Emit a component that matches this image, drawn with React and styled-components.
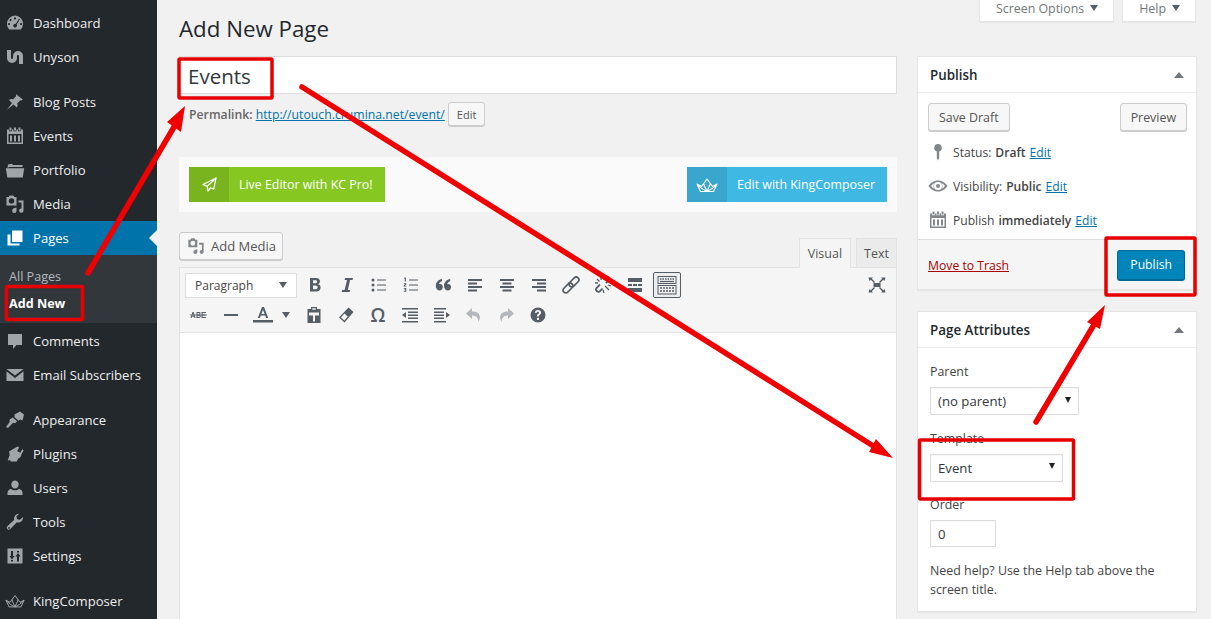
import styled, { createGlobalStyle } from 'styled-components'

const GlobalStyle = createGlobalStyle`
  html, body { margin: 0; padding: 0; background: #f1f1f1; }
  body { font-family: "Open Sans", "Noto Sans", sans-serif; font-size: 13px; color: #444; }
  * { box-sizing: border-box; }
`

const Page = styled.div`
  position: relative;
  display: flex;
  width: 1211px;
  height: 619px;
  overflow: hidden;
  background: #f1f1f1;
`

/* ---------- sidebar ---------- */
const Sidebar = styled.nav`
  flex: 0 0 157px;
  background: #23282d;
  padding-top: 6px;
`
const MenuItem = styled.div`
  position: relative;
  display: flex;
  align-items: center;
  height: 34px;
  padding-left: 5px;
  margin-bottom: ${p => (p.$gap ? '11px' : '0')};
  color: ${p => (p.$active ? '#fff' : '#eee')};
  background: ${p => (p.$active ? '#0073aa' : 'transparent')};
  font-size: 13.1px;
  svg { fill: ${p => (p.$active ? '#fff' : '#a0a5aa')}; }
  ${p => p.$active && `
    &::after {
      content: '';
      position: absolute;
      right: 0;
      top: 9px;
      border: 8px solid transparent;
      border-right-color: #f1f1f1;
      border-left: 0;
    }
  `}
`
const MenuIcon = styled.span`
  display: flex;
  justify-content: center;
  width: 20px;
  margin-right: 8px;
`
const Submenu = styled.div`
  height: 68px;
  margin-bottom: 1px;
  padding-top: 8px;
  background: #32373c;
`
const SubItem = styled.div`
  height: 27px;
  line-height: 27px;
  padding-left: 9px;
  font-size: 12.6px;
  font-weight: ${p => (p.$current ? 700 : 400)};
  color: ${p => (p.$current ? '#fff' : '#b4b9be')};
`

/* ---------- main column ---------- */
const Content = styled.main`
  display: flex;
  gap: 20px;
  padding-left: 22px;
`
const EditColumn = styled.div`
  width: 718px;
`
const Heading = styled.h1`
  margin: 0;
  height: 56px;
  padding-top: 14px;
  font-size: 22.3px;
  line-height: 29px;
  font-weight: 400;
  color: #23282d;
`
const TitleInput = styled.div`
  height: 38px;
  padding-left: 8px;
  background: #fff;
  border: 1px solid #ddd;
  font-size: 20.5px;
  line-height: 38px;
  color: #32373c;
`
const PermalinkRow = styled.div`
  display: flex;
  align-items: center;
  height: 24px;
  margin: 8px 0 31px;
  padding-left: 10px;
  font-size: 12.25px;
  color: #666;
  b { font-weight: 600; margin-right: 3px; }
`
const Link = styled.a`
  color: ${p => (p.$danger ? '#a00' : '#0073aa')};
  text-decoration: underline;
`
const SmallButton = styled.span`
  display: flex;
  align-items: center;
  height: 24px;
  margin-left: 3px;
  padding: 0 8px;
  font-size: 11px;
  color: #555;
  background: #f7f7f7;
  border: 1px solid #ccc;
  border-radius: 3px;
  box-shadow: 0 1px 0 #ccc;
`
const KcBar = styled.div`
  display: flex;
  justify-content: space-between;
  height: 55px;
  padding: 10px;
  background: #fafafa;
`
const KcButton = styled.div`
  display: flex;
  align-items: center;
  height: 35px;
  color: #fff;
  font-size: 12.4px;
  font-weight: 400;
  background: ${p => p.$color};
  padding-right: 12px;
`
const KcIcon = styled.span`
  display: flex;
  align-items: center;
  justify-content: center;
  width: 40px;
  height: 100%;
  margin-right: 10px;
  background: ${p => p.$color};
`
const EditorHead = styled.div`
  display: flex;
  justify-content: space-between;
  align-items: flex-end;
  height: 55px;
`
const MediaButton = styled.div`
  display: flex;
  align-items: center;
  gap: 6px;
  height: 28px;
  margin-bottom: 7px;
  padding: 0 6px 0 7px;
  color: #555;
  background: #f7f7f7;
  border: 1px solid #ccc;
  border-radius: 3px;
  box-shadow: 0 1px 0 #ccc;
  svg { fill: #82878c; }
`
const Tabs = styled.div`
  display: flex;
  gap: 5px;
`
const Tab = styled.div`
  height: ${p => (p.$active ? '30px' : '29px')};
  margin-bottom: ${p => (p.$active ? '-1px' : '0')};
  padding: 0 ${p => (p.$active ? '8px' : '7px')};
  line-height: 29px;
  font-size: 12.5px;
  color: #555;
  background: ${p => (p.$active ? '#f5f5f5' : '#ebebeb')};
  border: 1px solid #e2e2e2;
  border-bottom: ${p => (p.$active ? '1px solid #f5f5f5' : '0')};
`
const Toolbar = styled.div`
  display: flex;
  flex-direction: column;
  height: 66px;
  padding: 2px 3px 0;
  background: #f5f5f5;
  border: 1px solid #e2e2e2;
`
const ToolRow = styled.div`
  display: flex;
  align-items: center;
  height: 30px;
`
const FormatSelect = styled.div`
  display: flex;
  align-items: center;
  justify-content: space-between;
  width: 112px;
  height: 25px;
  margin: 0 2px;
  padding: 0 9px;
  font-size: 12px;
  color: #444;
  background: #fff;
  border: 1px solid #ddd;
`
const Caret = styled.span`
  width: 0;
  height: 0;
  border-style: solid;
  border-width: ${p => (p.$up ? '0 5px 6px' : '6px 4.5px 0')};
  border-color: ${p => (p.$up ? 'transparent transparent #72777c' : '#555d66 transparent transparent')};
`
const ToolButton = styled.span`
  display: flex;
  align-items: center;
  justify-content: center;
  width: 28px;
  height: 26px;
  margin: 0 2px;
  color: #555d66;
  border: 1px solid ${p => (p.$on ? '#555d66' : 'transparent')};
  border-radius: 2px;
  background: ${p => (p.$on ? '#eee' : 'transparent')};
  opacity: ${p => (p.$off ? 0.4 : 1)};
  svg { fill: #555d66; }
`
const SplitCaret = styled.span`
  display: flex;
  align-items: center;
  justify-content: center;
  width: 18px;
  margin-left: -2px;
  margin-right: 3px;
`
const ToolSpacer = styled.span`
  flex: 1;
`
const OmegaGlyph = styled.span`
  font-size: 19px;
  font-weight: 600;
`
const EditorArea = styled.div`
  height: 400px;
  background: #fff;
  border: 1px solid #e2e2e2;
  border-top: 0;
`

/* ---------- right column ---------- */
const SideColumn = styled.aside`
  width: 280px;
`
const ScreenTabs = styled.div`
  display: flex;
  justify-content: flex-end;
  gap: 8px;
  height: 22px;
  margin-bottom: 34px;
  padding-right: 1px;
`
const ScreenTab = styled.div`
  display: flex;
  align-items: center;
  gap: 6px;
  padding: 0 15px 5px 16px;
  font-size: 12.4px;
  color: #72777c;
  background: #fff;
  border: 1px solid #e5e5e5;
  border-top: 0;
  box-shadow: 0 1px 1px rgba(0, 0, 0, .04);
`
const Box = styled.section`
  margin-bottom: 21px;
  background: #fff;
  border: 1px solid #e5e5e5;
  box-shadow: 0 1px 1px rgba(0, 0, 0, .04);
`
const BoxHead = styled.header`
  display: flex;
  align-items: center;
  justify-content: space-between;
  height: 36px;
  padding: 0 12px;
  border-bottom: 1px solid #eee;
  font-size: 13.4px;
  font-weight: 600;
  color: #23282d;
`
const ActionRow = styled.div`
  display: flex;
  justify-content: space-between;
  padding: 10px 9px 0 10px;
`
const Button = styled.span`
  display: flex;
  align-items: center;
  height: 28px;
  padding: 0 10px;
  font-size: 12.4px;
  color: #555;
  background: #f7f7f7;
  border: 1px solid #ccc;
  border-radius: 3px;
  box-shadow: 0 1px 0 #ccc;
`
const StatusList = styled.div`
  padding: 4px 0 2px;
`
const StatusRow = styled.div`
  display: flex;
  align-items: center;
  height: 34px;
  padding-left: 10px;
  font-size: 12.1px;
  color: #444;
  b { font-weight: 600; margin: 0 4px; }
`
const StatusIcon = styled.span`
  display: flex;
  justify-content: center;
  width: 20px;
  margin-right: 5px;
  svg { fill: #82878c; flex: none; }
`
const BoxFoot = styled.div`
  display: flex;
  align-items: center;
  justify-content: space-between;
  height: 50px;
  padding: 1px 11px 0 10px;
  font-size: 12.2px;
  background: #f5f5f5;
  border-top: 1px solid #ddd;
`
const PrimaryButton = styled.span`
  display: flex;
  align-items: center;
  height: 31px;
  padding: 0 12px;
  color: #fff;
  font-size: 12.2px;
  background: #0085ba;
  border: 1px solid #006799;
  border-bottom-width: 2px;
  border-radius: 3px;
`
const AttrBody = styled.div`
  padding: 14px 12px 12px;
`
const FieldLabel = styled.div`
  height: 18px;
  line-height: 20px;
  margin-bottom: 7px;
  font-size: 12.4px;
  color: #444;
`
const SelectField = styled.div`
  display: flex;
  align-items: center;
  justify-content: space-between;
  width: ${p => p.$w}px;
  height: 28px;
  margin-bottom: 13.5px;
  padding: 0 7px;
  font-size: 13.2px;
  color: #32373c;
  border: 1px solid #ddd;
  box-shadow: inset 0 1px 2px rgba(0, 0, 0, .04);
`
const BlackCaret = styled.span`
  width: 0;
  height: 0;
  border-style: solid;
  border-width: 6px 3.5px 0;
  border-color: #222 transparent transparent;
  margin-top: -3px;
`
const NumberField = styled(SelectField)`
  height: 27px;
`
const HelpText = styled.p`
  margin: 0;
  font-size: 12.4px;
  line-height: 19px;
  color: #444;
`

/* ---------- red annotations, lying over the page ---------- */
const Annotations = styled.svg`
  position: absolute;
  left: 0;
  top: 0;
  pointer-events: none;
`

const Svg = ({ size = 20, children }) => (
  <svg width={size} height={size} viewBox="0 0 20 20">{children}</svg>
)

/* sidebar + box icons, all on a 20 grid */
const IconGauge = () => <Svg><path fillRule="evenodd" d="M10 2.5a8.2 8.2 0 0 0-8 8.2c0 2.3.9 4.3 2.3 5.8h11.4a8.2 8.2 0 0 0 2.3-5.8 8.2 8.2 0 0 0-8-8.2zM10 4.3a1.1 1.1 0 1 1 0 2.2 1.1 1.1 0 0 1 0-2.2zM5.6 6a1.1 1.1 0 1 1 0 2.2 1.1 1.1 0 0 1 0-2.2zM14 5.8l.9.5-3.2 5.2a1.9 1.9 0 1 1-3-.1 1.9 1.9 0 0 1 2-.5zM4 10a1.1 1.1 0 1 1 0 2.2 1.1 1.1 0 0 1 0-2.2zM16 10a1.1 1.1 0 1 1 0 2.2 1.1 1.1 0 0 1 0-2.2z" /></Svg>
const IconUnyson = () => (
  <Svg>
    <path d="M4 3v8a3 3 0 0 0 6 0V9a3 3 0 0 1 6 0v8" fill="none" stroke="#a0a5aa" strokeWidth="4" />
  </Svg>
)
const IconPin = () => <Svg><path d="M11.2 2.2l6.6 5.2-1.3 1.2-1-.4-3.300 3.300c.7 1.5.5 2.900-.5 4l-3.200-3-6.500 5.200 5-6.700-3-3c1.100-1.100 2.600-1.300 4-.6l3.200-3.300-.4-1z" /></Svg>
const IconCalendar = ({ size }) => <Svg size={size}><path fillRule="evenodd" d="M4.5 1.5h2v3h-2zM9 1.5h2v3H9zM13.5 1.5h2v3h-2zM2 3.5h2v1.800h3V3.500h1.500v1.800h3V3.500H13v1.800h3V3.500h2V18H2zM3.500 8v8.500h13V8zM5 9.500h2v6H5zM9 9.500h2v6H9zM13 9.500h2v6h-2z" /></Svg>
const IconFolder = () => <Svg><path d="M3 4.500l4-.8 1 1.300h9.500V7H4.500l-2 1zM.8 8.200h18.400l-1.400 9.300H2.300z" /></Svg>
const IconMedia = ({ size }) => <Svg size={size}><path fillRule="evenodd" d="M1.5 3h2.200l1-1.500h3.600l1 1.500h2.200v8.500H1.500zM6.500 4.200a2.700 2.700 0 1 0 0 5.400 2.700 2.700 0 0 0 0-5.400zM13.500 6.500h5v10a2.200 2.200 0 1 1-2-2.100V8.500h-3zM8 14.500l3.500-1v3.200a2.200 2.200 0 1 1-2-2.100v-.8l-1.500.4z" /></Svg>
const IconPages = () => <Svg><path d="M7 2.500h10.500V14H7zM2.500 6.500h3v9h9v2h-12z" /></Svg>
const IconComment = () => <Svg><path d="M3 3h14v11h-5.500L8 18v-4H3z" /></Svg>
const IconMail = () => <Svg><path d="M1.500 4h17L10 10.500zM1.500 6.200L10 13l8.500-6.800V16h-17z" /></Svg>
const IconBrush = () => <Svg><path d="M9.500 4.500l5.500-3 4 3-1.500 6-2.500-1-1.500 1.200-4-3.500zM7.800 7.500l4.300 3.700-2 2-2-.5L3 18l-2-1 3.800-5.300-.3-2.200z" /></Svg>
const IconPlug = () => <Svg><path d="M12.500 2.500l1.700 1-2 3.500 3 1.700 2-3.500 1.500 1-2.200 4c-.3 2.300-1.500 3.800-3.300 4.300l-1.400 3H5.500l-.3-1.500-2.500.5 2-5.500L4 7.500z" /></Svg>
const IconUser = () => <Svg><path d="M10 2.500a3.700 3.700 0 0 1 3.700 4c0 2.300-1.500 4-3.700 4s-3.700-1.700-3.700-4a3.700 3.700 0 0 1 3.700-4zM6 10.800c1 1 2.500 1.500 4 1.500s3-.5 4-1.500c2 .7 3.500 2.200 3.500 4V17h-15v-2.200c0-1.800 1.500-3.300 3.500-4z" /></Svg>
const IconWrench = () => <Svg><path d="M18 5.500a4.700 4.700 0 0 1-6.200 4.700L5.300 17a2 2 0 0 1-3-2.700l7-6.500A4.700 4.700 0 0 1 14.200 1.700l-2.700 2.600.5 3 3 .5 2.700-2.700zM4 15a.9.9 0 1 0 0 1.800A.9.9 0 0 0 4 15z" /></Svg>
const IconSliders = () => <Svg><path fillRule="evenodd" d="M2.500 2.500h15v15h-15zM6 5v5H4.500L7 13.500 9.500 10H8V5zM6 14v1.500h2V14zM12 15.500h2v-5h1.500L13 7l-2.500 3.500H12zM12 6.500h2V5h-2z" /></Svg>
const IconCrown = ({ color = '#a0a5aa', size = 20 }) => (
  <svg width={size} height={size} viewBox="0 0 22 20" style={{ fill: 'none' }}>
    <path d="M1 9l4.500 2.500L11 4l5.500 7.500L21 9l-3.500 7.500h-13zM1 9c3 4 7 6 10 7.500C14 15 18 13 21 9M7.500 8.500C8.500 11 10 14 11 16.500c1-2.500 2.500-5.500 3.500-8" stroke={color} strokeWidth="1.100" strokeLinejoin="round" />
  </svg>
)
const IconSend = () => (
  <svg width="15" height="15" viewBox="0 0 16 16" style={{ fill: 'none' }}>
    <path d="M15 1L1 8l4.500 2zM15 1L5.500 10l1 5 2.500-3.500 3.500 1.500z" stroke="#fff" strokeWidth="1.300" strokeLinejoin="round" />
  </svg>
)
const IconKey = () => <Svg><path d="M10 2a3.800 3.800 0 0 1 1.200 7.400V16L10 18.500 8.800 16V9.400A3.800 3.800 0 0 1 10 2z" /></Svg>
const IconEye = () => <Svg><path fillRule="evenodd" d="M10 4.500c4.300 0 7.700 2.700 9.500 5.500-1.800 2.800-5.200 5.500-9.500 5.500S2.300 12.800.5 10C2.300 7.200 5.700 4.500 10 4.500zM10 6a4 4 0 1 0 0 8 4 4 0 0 0 0-8zM3 10c1 1.300 2.200 2.400 3.600 3.100A5.500 5.500 0 0 1 6.600 6.900 10 10 0 0 0 3 10zM17 10a10 10 0 0 0-3.600-3.100 5.500 5.500 0 0 1 0 6.200c1.400-.7 2.600-1.800 3.600-3.100zM10 8a2 2 0 1 1 0 4 2 2 0 0 1 0-4z" /></Svg>

/* editor toolbar icons */
const Lines = ({ rows }) => (
  <Svg>
    {rows.map(([x, y, w, h = 2], i) => <rect key={i} x={x} y={y} width={w} height={h} />)}
  </Svg>
)
const IconBold = () => <Svg><path fillRule="evenodd" d="M5 3h6c2.500 0 4 1.300 4 3.300 0 1.500-.8 2.500-2 2.900 1.600.3 2.600 1.500 2.600 3.300 0 2.500-1.800 4-4.600 4H5zM8 5.300v2.900h2.300c1.100 0 1.700-.5 1.700-1.500s-.6-1.400-1.700-1.400zM8 10.400v3.800h2.600c1.300 0 2-.7 2-1.900s-.7-1.900-2-1.900z" /></Svg>
const IconItalic = () => <Svg><path d="M8 3h8l-.5 2h-2.400L10.800 15h2.400l-.5 2H4.700l.5-2h2.400L10 5H7.600z" /></Svg>
const IconUl = () => (
  <Svg>
    <circle cx="4" cy="5" r="1.500" /><circle cx="4" cy="10" r="1.500" /><circle cx="4" cy="15" r="1.500" />
    <rect x="8" y="4.500" width="9" height="1" /><rect x="8" y="9.500" width="9" height="1" /><rect x="8" y="14.500" width="9" height="1" />
  </Svg>
)
const IconOl = () => (
  <Svg>
    <rect x="8" y="4.500" width="9" height="1" /><rect x="8" y="9.500" width="9" height="1" /><rect x="8" y="14.500" width="9" height="1" />
    <path d="M3.500 2.500h1.300v4H3.700V3.700h-.7zM2.800 8.200h2.500v1l-1.400 1.500h1.500v.8H2.700v-.9l1.400-1.600H2.800zM2.800 13h2.500v3.700H2.800v-.8h1.500v-.7H3.200v-.7h1.100v-.7H2.800z" />
  </Svg>
)
const IconQuote = () => <Svg><path d="M9 4v2.200c-1.900.5-2.900 1.700-2.900 2.900.3-.1.600-.1.900-.1 1.700 0 2.800 1.200 2.800 2.900S8.500 15.500 6.800 15.500C4.500 15.500 2.800 13.700 2.800 10.800 2.800 7.500 5 4.700 9 4zM17.200 4v2.200c-1.900.5-2.900 1.700-2.900 2.900.3-.1.600-.1.900-.1 1.700 0 2.800 1.200 2.800 2.900s-1.300 3.600-3 3.600c-2.300 0-4-1.800-4-4.700 0-3.300 2.200-6.100 6.200-6.800z" /></Svg>
const IconLink = () => (
  <svg width="20" height="20" viewBox="0 0 20 20" style={{ fill: 'none' }}>
    <g stroke="#555d66" strokeWidth="1.700" fill="none" transform="rotate(-45 10 10)">
      <rect x="0" y="7.300" width="11.500" height="5.400" rx="2.700" />
      <rect x="8.500" y="7.300" width="11.500" height="5.400" rx="2.700" />
    </g>
  </svg>
)
const IconUnlink = () => (
  <svg width="20" height="20" viewBox="0 0 20 20" style={{ fill: 'none' }}>
    <path d="M7 9.500L3.500 13c-1.800 2 1.500 5 3.500 3.200l2.500-2.700M13 8l3-3c1.500-2-1.500-4.500-3.300-2.800L10.500 4.500" stroke="#555d66" strokeWidth="1.800" />
    <path d="M4 4l2.500 2.500M8 2v3M2 8h3M12 11l4 4M15 10l3 1M10 15l1 3" stroke="#555d66" strokeWidth="1.300" />
  </svg>
)
const IconFullscreen = () => (
  <Svg>
    <rect x="6.500" y="8" width="7" height="4" />
    <path d="M1.500 2.500h4.500L4.800 3.800 8 7 7 8 3.800 4.800 2.500 6zM18.500 2.500H14l1.200 1.300L12 7l1 1 3.200-3.200L17.500 6zM1.500 17.500H6l-1.200-1.300L8 13l-1-1-3.200 3.200L2.500 14zM18.500 17.500H14l1.200-1.300L12 13l1-1 3.200 3.200 1.300-1.200z" />
  </Svg>
)
const IconKeyboard = () => (
  <svg width="22" height="22" viewBox="0 0 22 22" style={{ fill: 'none' }}>
    <rect x="2" y="2.500" width="18" height="7" stroke="#555d66" strokeWidth="1" />
    <rect x="2" y="11.500" width="18" height="8.500" stroke="#555d66" strokeWidth="1" />
    <path d="M4 5h14" stroke="#555d66" strokeWidth="1.500" strokeDasharray="1.500 1" />
    <path d="M4 7.500h14" stroke="#555d66" strokeWidth="1.200" />
    <path d="M4 14h14M4 17h14" stroke="#555d66" strokeWidth="1.500" strokeDasharray="2 1" />
  </svg>
)
const IconAbc = () => (
  <svg width="20" height="20" viewBox="0 0 20 20">
    <path d="M1.500 13l2-6h1.200l2 6H5.500l-.4-1.300H3l-.4 1.300zM3.300 10.800h1.500L4.100 8.500zM7.500 7h2.400c1.100 0 1.700.5 1.700 1.500 0 .6-.3 1-.8 1.200.7.200 1 .7 1 1.400 0 1.200-.8 1.900-2 1.900H7.500zM8.600 8v1.500h1.100c.5 0 .8-.3.8-.8S10.200 8 9.700 8zM8.600 10.400V12h1.300c.5 0 .9-.3.9-.8s-.4-.8-.9-.8zM12.500 7h4.500v1h-3.400v1.500h3v1h-3V12H17v1h-4.500z" />
    <rect x="1" y="9.500" width="17" height="1" opacity=".75" />
  </svg>
)
const IconColor = () => (
  <Svg>
    <path fillRule="evenodd" d="M9 2h2l4.200 11h-2.100l-.9-2.600H7.800L6.900 13H4.800zM10 4.700L8.400 8.900h3.200z" />
    <rect x="0" y="15" width="20" height="2.500" />
  </Svg>
)
const IconPaste = () => <Svg><path fillRule="evenodd" d="M7 2h6v2h3.500v14h-13V4H7zM8.300 3.200v1.500h3.400V3.200zM5 7.500v3h4v6h2v-6h4v-3z" /></Svg>
const IconEraser = () => <Svg><path fillRule="evenodd" d="M12.500 2.500l5 4.500-9 10.500L3 12.500zM5 12.500l3.300 3 3.500-4-3.400-3z" /></Svg>
const IconOutdent = () => <Svg><path d="M2 3h16v1.500H2zM8 6.500h10V8H8zM8 9.500h10V11H8zM8 12.500h10V14H8zM2 16h16v1.500H2zM2 10l4-3v6z" /></Svg>
const IconIndent = () => <Svg><path d="M2 3h12v1.500H2zM2 6.500h10V8H2zM2 9.500h10V11H2zM2 12.500h10V14H2zM2 16h12v1.500H2zM18 10l-4-3v6z" /></Svg>
const IconUndo = () => <Svg><path d="M8 3L2 8.500 8 14v-3.500c4 0 6 2 6.500 6.500 3-5 1.500-10.500-6.500-10.500z" /></Svg>
const IconRedo = () => <Svg><path d="M12 3l6 5.500-6 5.500v-3.500c-4 0-6 2-6.500 6.500-3-5-1.500-10.500 6.500-10.500z" /></Svg>
const IconHelp = () => <Svg><path fillRule="evenodd" d="M10 2.500a7.500 7.500 0 1 1 0 15 7.500 7.500 0 0 1 0-15zM10 5c-1.800 0-3 1-3.200 2.700l1.900.3c.1-.8.500-1.200 1.200-1.200.7 0 1.100.4 1.100.9 0 .5-.3.800-.9 1.300-.9.700-1.200 1.300-1.200 2.500h2c0-.8.200-1.100.9-1.600.8-.6 1.300-1.300 1.300-2.300C13.100 6 11.900 5 10 5zM9 12.800V15h2v-2.200z" /></Svg>

const RED = '#e60000'

const Frame = ({ x, y, w, h }) => (
  <rect x={x} y={y} width={w} height={h} fill="none" stroke={RED} strokeWidth="3.500" rx="1" />
)
const Arrow = ({ from, to, head }) => (
  <g>
    <line x1={from[0]} y1={from[1]} x2={(head[0][0] + head[1][0]) / 2} y2={(head[0][1] + head[1][1]) / 2} stroke="#f00000" strokeWidth="5.500" strokeLinecap="round" />
    <polygon points={`${to[0]},${to[1]} ${head[0][0]},${head[0][1]} ${head[1][0]},${head[1][1]}`} fill="#f00000" />
  </g>
)

const menuTop = [
  { label: 'Dashboard', icon: <IconGauge /> },
  { label: 'Unyson', icon: <IconUnyson />, gap: true },
  { label: 'Blog Posts', icon: <IconPin /> },
  { label: 'Events', icon: <IconCalendar /> },
  { label: 'Portfolio', icon: <IconFolder /> },
  { label: 'Media', icon: <IconMedia /> },
]
const menuBottom = [
  { label: 'Comments', icon: <IconComment /> },
  { label: 'Email Subscribers', icon: <IconMail />, gap: true },
  { label: 'Appearance', icon: <IconBrush /> },
  { label: 'Plugins', icon: <IconPlug /> },
  { label: 'Users', icon: <IconUser /> },
  { label: 'Tools', icon: <IconWrench /> },
  { label: 'Settings', icon: <IconSliders />, gap: true },
  { label: 'KingComposer', icon: <IconCrown /> },
]

const renderMenu = items => items.map(item => (
  <MenuItem key={item.label} $gap={item.gap}>
    <MenuIcon>{item.icon}</MenuIcon>
    <span>{item.label}</span>
  </MenuItem>
))

export default function App() {
  return (
    <Page>
      <GlobalStyle />
      <Sidebar>
        {renderMenu(menuTop)}
        <MenuItem $active>
          <MenuIcon><IconPages /></MenuIcon>
          <span>Pages</span>
        </MenuItem>
        <Submenu>
          <SubItem>All Pages</SubItem>
          <SubItem $current>Add New</SubItem>
        </Submenu>
        {renderMenu(menuBottom)}
      </Sidebar>

      <Content>
        <EditColumn>
          <Heading>Add New Page</Heading>
          <TitleInput>Events</TitleInput>
          <PermalinkRow>
            <b>Permalink:</b>
            <Link>http://utouch.crumina.net/event/</Link>
            <SmallButton>Edit</SmallButton>
          </PermalinkRow>
          <KcBar>
            <KcButton $color="#87c722">
              <KcIcon $color="#79b31e"><IconSend /></KcIcon>
              Live Editor with KC Pro!
            </KcButton>
            <KcButton $color="#3fb8e3">
              <KcIcon $color="#39a6cd"><IconCrown color="#fff" size={22} /></KcIcon>
              Edit with KingComposer
            </KcButton>
          </KcBar>
          <EditorHead>
            <MediaButton><IconMedia size={18} />Add Media</MediaButton>
            <Tabs>
              <Tab $active>Visual</Tab>
              <Tab>Text</Tab>
            </Tabs>
          </EditorHead>
          <Toolbar>
            <ToolRow>
              <FormatSelect>Paragraph<Caret /></FormatSelect>
              <ToolButton><IconBold /></ToolButton>
              <ToolButton><IconItalic /></ToolButton>
              <ToolButton><IconUl /></ToolButton>
              <ToolButton><IconOl /></ToolButton>
              <ToolButton><IconQuote /></ToolButton>
              <ToolButton><Lines rows={[[3, 4, 14], [3, 7.5, 9], [3, 11, 14], [3, 14.5, 9]]} /></ToolButton>
              <ToolButton><Lines rows={[[3, 4, 14], [5.5, 7.5, 9], [3, 11, 14], [5.5, 14.5, 9]]} /></ToolButton>
              <ToolButton><Lines rows={[[3, 4, 14], [8, 7.5, 9], [3, 11, 14], [8, 14.5, 9]]} /></ToolButton>
              <ToolButton><IconLink /></ToolButton>
              <ToolButton><IconUnlink /></ToolButton>
              <ToolButton><Lines rows={[[3, 3, 14, 4], [3, 9, 4], [8, 9, 4], [13, 9, 4], [3, 13, 14, 4]]} /></ToolButton>
              <ToolButton $on><IconKeyboard /></ToolButton>
              <ToolSpacer />
              <ToolButton><IconFullscreen /></ToolButton>
            </ToolRow>
            <ToolRow>
              <ToolButton><IconAbc /></ToolButton>
              <ToolButton><Lines rows={[[3, 9, 14]]} /></ToolButton>
              <ToolButton><IconColor /></ToolButton>
              <SplitCaret><Caret /></SplitCaret>
              <ToolButton><IconPaste /></ToolButton>
              <ToolButton><IconEraser /></ToolButton>
              <ToolButton><OmegaGlyph>Ω</OmegaGlyph></ToolButton>
              <ToolButton><IconOutdent /></ToolButton>
              <ToolButton><IconIndent /></ToolButton>
              <ToolButton $off><IconUndo /></ToolButton>
              <ToolButton $off><IconRedo /></ToolButton>
              <ToolButton><IconHelp /></ToolButton>
            </ToolRow>
          </Toolbar>
          <EditorArea />
        </EditColumn>

        <SideColumn>
          <ScreenTabs>
            <ScreenTab>Screen Options <Caret /></ScreenTab>
            <ScreenTab>Help <Caret /></ScreenTab>
          </ScreenTabs>

          <Box>
            <BoxHead>Publish<Caret $up /></BoxHead>
            <ActionRow>
              <Button>Save Draft</Button>
              <Button>Preview</Button>
            </ActionRow>
            <StatusList>
              <StatusRow><StatusIcon><IconKey /></StatusIcon>Status:<b>Draft</b><Link>Edit</Link></StatusRow>
              <StatusRow><StatusIcon><IconEye /></StatusIcon>Visibility:<b>Public</b><Link>Edit</Link></StatusRow>
              <StatusRow><StatusIcon><IconCalendar /></StatusIcon>Publish<b>immediately</b><Link>Edit</Link></StatusRow>
            </StatusList>
            <BoxFoot>
              <Link $danger>Move to Trash</Link>
              <PrimaryButton>Publish</PrimaryButton>
            </BoxFoot>
          </Box>

          <Box>
            <BoxHead>Page Attributes<Caret $up /></BoxHead>
            <AttrBody>
              <FieldLabel>Parent</FieldLabel>
              <SelectField $w={149}>(no parent)<BlackCaret /></SelectField>
              <FieldLabel>Template</FieldLabel>
              <SelectField $w={133}>Event<BlackCaret /></SelectField>
              <FieldLabel>Order</FieldLabel>
              <NumberField $w={66}>0</NumberField>
              <HelpText>Need help? Use the Help tab above the screen title.</HelpText>
            </AttrBody>
          </Box>
        </SideColumn>
      </Content>

      <Annotations width="1211" height="619" viewBox="0 0 1211 619">
        <Frame x={179} y={59} w={93} h={39} />
        <Frame x={6.5} y={286.5} w={76} h={33} />
        <Frame x={1106} y={238} w={89} h={57} />
        <Frame x={919.5} y={440} w={154} h={59} />
        <Arrow from={[88, 273]} to={[185, 106]} head={[[167, 122], [181, 132]]} />
        <Arrow from={[302, 87]} to={[893, 458]} head={[[876, 439], [869, 452]]} />
        <Arrow from={[1036, 422]} to={[1105, 305]} head={[[1087, 322], [1100, 329]]} />
      </Annotations>
    </Page>
  )
}
